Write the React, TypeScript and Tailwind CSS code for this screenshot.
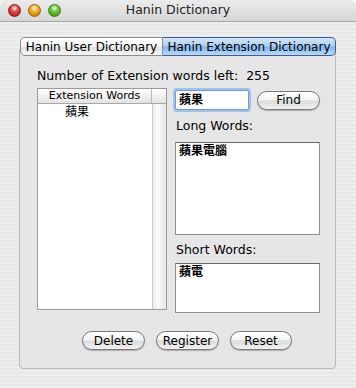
import React from "react";

const stripes =
  "bg-[repeating-linear-gradient(180deg,#eeeeee_0px,#eeeeee_2px,#e7e7e7_2px,#e7e7e7_4px)]";

function Light({ from, to, ring }: { from: string; to: string; ring: string }) {
  return (
    <span
      className="block w-[13px] h-[13px] rounded-full border"
      style={{
        background: `radial-gradient(circle at 50% 30%, #ffffff 0%, ${from} 35%, ${to} 100%)`,
        borderColor: ring,
      }}
    />
  );
}

function AquaButton({ label, w }: { label: string; w: number }) {
  return (
    <div
      className="h-[19px] rounded-full border border-[#7a7a7a] bg-[linear-gradient(180deg,#ffffff_0%,#f4f4f4_45%,#dcdcdc_55%,#f2f2f2_100%)] flex items-center justify-center text-[12px] text-black shadow-[0_1px_1px_rgba(0,0,0,0.25)]"
      style={{ width: w }}
    >
      {label}
    </div>
  );
}

export default function App() {
  return (
    <div
      className="w-[356px] h-[388px] flex flex-col overflow-hidden text-black"
      style={{ fontFamily: '"DejaVu Sans", "Noto Sans CJK TC", sans-serif' }}
    >
      {/* Title bar */}
      <div className="h-[22px] relative flex items-center justify-center bg-[linear-gradient(180deg,#ececec_0%,#d6d6d6_100%)] border-b border-[#a8a8a8] rounded-t-[5px]">
        <div className="absolute left-[8px] top-[4px] flex gap-[7px]">
          <Light from="#e84a4a" to="#a80f0f" ring="#8a1a1a" />
          <Light from="#f5b321" to="#c26a06" ring="#9a6010" />
          <Light from="#6fcb3a" to="#2f8a10" ring="#3e7a18" />
        </div>
        <span className="text-[12.5px] text-[#222]">Hanin Dictionary</span>
      </div>

      {/* Body */}
      <div className={`flex-1 ${stripes} pl-[19px] pr-[20px] pt-[15px]`}>
        {/* Tabs */}
        <div className="relative z-10 flex h-[19px] pl-[1px] -mb-[9px] text-[12px]">
          <div className="w-[143px] h-[19px] flex items-center justify-center rounded-l-[5px] border border-[#8c8c8c] bg-[linear-gradient(180deg,#ffffff_0%,#f3f3f3_50%,#e2e2e2_52%,#f5f5f5_100%)]">
            Hanin User Dictionary
          </div>
          <div className="w-[173px] h-[19px] flex items-center justify-center rounded-r-[5px] border border-l-0 border-[#3c5f93] bg-[linear-gradient(180deg,#d5e8fb_0%,#a9cdf3_48%,#7fb4ec_52%,#b9dafa_100%)]">
            Hanin Extension Dictionary
          </div>
        </div>

        {/* Panel */}
        <div className="w-[317px] h-[322px] rounded-[4px] border border-[#b9b9b9] bg-[#e6e6e6] pt-[20px] pl-[17px]">
          <div className="text-[12.5px] leading-[16px]">
            Number of Extension words left:&nbsp; 255
          </div>

          <div className="flex mt-[4px]">
            {/* List */}
            <div className="w-[130px] h-[222px] border border-[#9a9a9a] bg-white flex flex-col">
              <div className="h-[15px] flex border-b border-[#a9a9a9] bg-[linear-gradient(180deg,#ffffff_0%,#f1f1f1_50%,#e3e3e3_100%)] text-[11px]">
                <div className="w-[114px] flex items-center justify-center border-r border-[#b9b9b9]">
                  Extension Words
                </div>
                <div className="flex-1" />
              </div>
              <div className="flex-1 flex">
                <div className="w-[114px] pl-[27px] pt-[1px] text-[12px] leading-[15px]">蘋果</div>
                <div className="flex-1 border-l border-[#c9c9c9] bg-[linear-gradient(90deg,#eeeeee_0%,#fafafa_40%,#e6e6e6_100%)]" />
              </div>
            </div>

            {/* Right column */}
            <div className="ml-[8px] flex flex-col">
              <div className="flex items-center mt-[2px]">
                <div className="w-[74px] h-[20px] rounded-[2px] border border-[#6e9bd6] shadow-[0_0_0_2px_#9fc3ee] bg-white pl-[3px] flex items-center text-[12px] font-bold">
                  蘋果
                </div>
                <div className="ml-[8px]">
                  <AquaButton label="Find" w={63} />
                </div>
              </div>

              <div className="mt-[8px] text-[12.5px] leading-[16px] pl-[1px]">Long Words:</div>
              <div className="mt-[8px] w-[145px] h-[93px] border border-[#8e8e8e] border-t-[#6a6a6a] bg-white pl-[3px] pt-[1px] text-[12px] font-bold leading-[15px]">
                蘋果電腦
              </div>

              <div className="mt-[7px] text-[12.5px] leading-[16px] pl-[1px]">Short Words:</div>
              <div className="mt-[5px] w-[145px] h-[50px] border border-[#8e8e8e] border-t-[#6a6a6a] bg-white pl-[3px] pt-[1px] text-[12px] font-bold leading-[15px]">
                蘋電
              </div>
            </div>
          </div>

          {/* Bottom buttons */}
          <div className="flex gap-[11px] mt-[18px] pl-[45px]">
            <AquaButton label="Delete" w={63} />
            <AquaButton label="Register" w={63} />
            <AquaButton label="Reset" w={62} />
          </div>
        </div>
      </div>
    </div>
  );
}
